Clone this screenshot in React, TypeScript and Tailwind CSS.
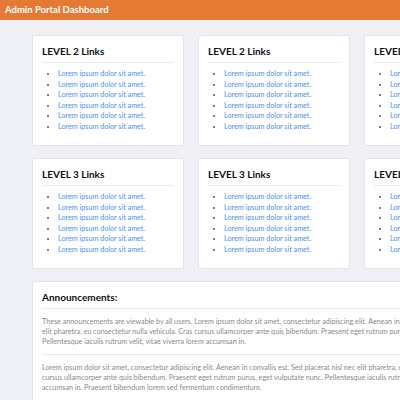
const links = Array.from({ length: 6 }, () => "Lorem ipsum dolor sit amet.");

function LinkCard({ title }: { title: string }) {
  return (
    <div className="w-[152px] rounded-[2px] border border-[#e3e5ea] bg-white px-[9px] pt-[8px] pb-[13px]">
      <h3 className="h-[14px] text-[10px] leading-[14px] font-bold text-[#111]">{title}</h3>
      <div className="mt-[4px] h-px bg-[#e8e9ee]" />
      <ul className="mt-[6px] list-disc pl-[16px] text-[7.2px] leading-[10.5px] text-[#4b8ff5] marker:text-[#555]">
        {links.map((l, i) => (
          <li key={i}>
            <a href="#">{l}</a>
          </li>
        ))}
      </ul>
    </div>
  );
}

export default function App() {
  return (
    <div className="min-h-screen overflow-hidden bg-[#eff0f5] font-['Lato',sans-serif]">
      {/* Top bar */}
      <div className="flex h-[20px] items-center bg-[#e67a35] px-[5px]">
        <span className="text-[9.5px] font-bold text-white">Admin Portal Dashboard</span>
      </div>

      <div className="w-[600px] pt-[15px] pl-[32px]">
        <div className="grid w-[484px] grid-cols-[152px_152px_152px] gap-x-[14px] gap-y-[12px]">
          <LinkCard title="LEVEL 2 Links" />
          <LinkCard title="LEVEL 2 Links" />
          <LinkCard title="LEVEL 2 Links" />
          <LinkCard title="LEVEL 3 Links" />
          <LinkCard title="LEVEL 3 Links" />
          <LinkCard title="LEVEL 3 Links" />
        </div>

        {/* Announcements */}
        <div className="mt-[12px] w-[491px] rounded-[2px] border border-[#e3e5ea] bg-white px-[9px] pt-[8px] pb-[12px]">
          <h3 className="h-[14px] text-[10px] leading-[14px] font-bold text-[#111]">Announcements:</h3>
          <div className="mt-[4px] h-px bg-[#e8e9ee]" />
          <p className="mt-[8px] text-[7.2px] leading-[10px] text-[#8a8a8a]">
            These announcements are viewable by all users. Lorem ipsum dolor sit amet, consectetur adipiscing elit.
            Aenean in convallis est. Sed placerat nisl nec elit pharetra, eu consectetur nulla vehicula. Cras cursus
            ullamcorper ante quis bibendum. Praesent eget rutrum purus, eget vulputate nunc. Pellentesque iaculis
            rutrum velit, vitae viverra lorem accumsan in.
          </p>
          <div className="mt-[7px] h-px bg-[#e8e9ee]" />
          <p className="mt-[8px] text-[7.2px] leading-[10px] text-[#8a8a8a]">
            Lorem ipsum dolor sit amet, consectetur adipiscing elit. Aenean in convallis est. Sed placerat nisl nec
            elit pharetra, eu consectetur nulla vehicula. Cras cursus ullamcorper ante quis bibendum. Praesent eget
            rutrum purus, eget vulputate nunc. Pellentesque iaculis rutrum velit, vitae viverra lorem accumsan in.
            Praesent bibendum lorem sed fermentum condimentum.
          </p>
        </div>
      </div>
    </div>
  );
}
